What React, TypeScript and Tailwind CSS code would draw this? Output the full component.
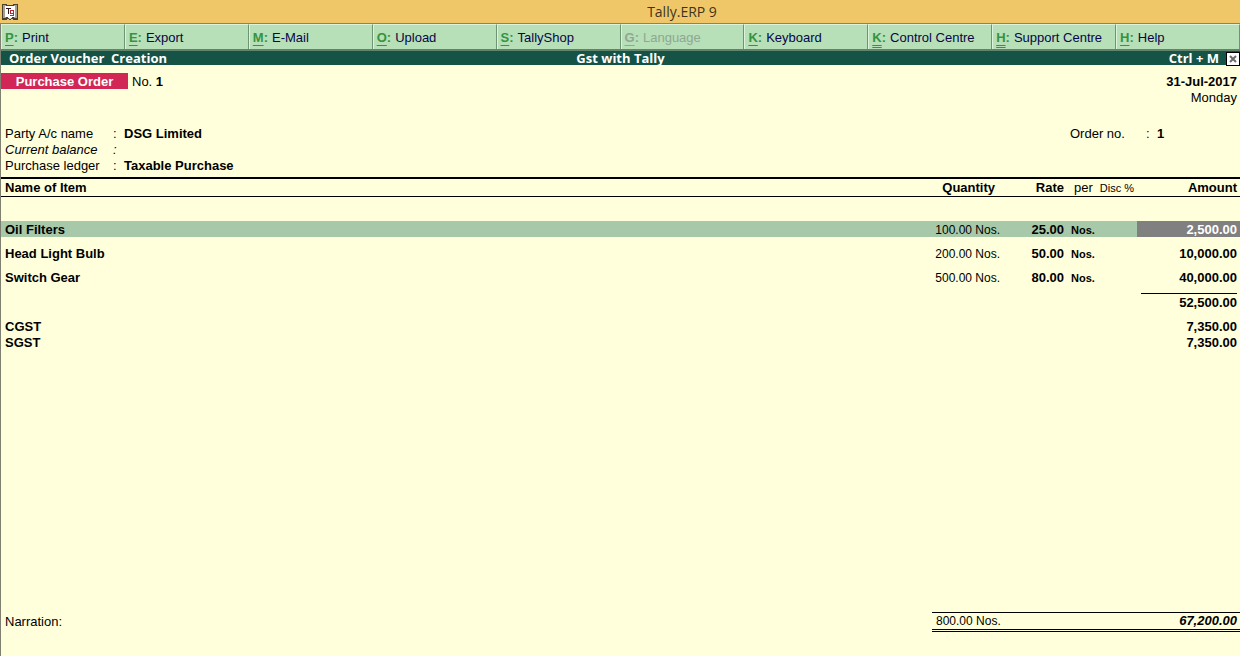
import React from 'react';

interface MenuItem {
  hotkey: string;
  label: string;
  disabled?: boolean;
  double?: boolean;
}

interface OrderItem {
  name: string;
  quantity: string;
  rate: string;
  per: string;
  amount: string;
}

const MENU: MenuItem[] = [
  { hotkey: 'P', label: 'Print' },
  { hotkey: 'E', label: 'Export' },
  { hotkey: 'M', label: 'E-Mail' },
  { hotkey: 'O', label: 'Upload' },
  { hotkey: 'S', label: 'TallyShop' },
  { hotkey: 'G', label: 'Language', disabled: true },
  { hotkey: 'K', label: 'Keyboard' },
  { hotkey: 'K', label: 'Control Centre', double: true },
  { hotkey: 'H', label: 'Support Centre', double: true },
  { hotkey: 'H', label: 'Help' },
];

const ITEMS: OrderItem[] = [
  { name: 'Oil Filters', quantity: '100.00 Nos.', rate: '25.00', per: 'Nos.', amount: '2,500.00' },
  { name: 'Head Light Bulb', quantity: '200.00 Nos.', rate: '50.00', per: 'Nos.', amount: '10,000.00' },
  { name: 'Switch Gear', quantity: '500.00 Nos.', rate: '80.00', per: 'Nos.', amount: '40,000.00' },
];

const TAXES = [
  { name: 'CGST', amount: '7,350.00' },
  { name: 'SGST', amount: '7,350.00' },
];

const SELECTED_ROW = 0;

const AppIcon = () => (
  <svg width="16" height="16" viewBox="0 0 16 16" shapeRendering="crispEdges" aria-hidden="true">
    <path d="M0 0h5v1h6V0h5v16h-5v-1H9v1H7v-1H5v1H0z" fill="#4a4030" />
    <path d="M1 1h3v13H1zM12 1h3v13h-3z" fill="#a5a092" />
    <path d="M3 2h10v11h-3v1H6v-1H3z" fill="#fff" />
    <path d="M4 4h5v1H4zM6 4h1v6H6z" fill="#30181c" />
    <path d="M8 6h4v6H8v-1h3v-1H8zM9 7v2h2V7z" fill="#b52a32" fillRule="evenodd" />
    <path d="M7 14h2v1H7z" fill="#d9d4c4" />
  </svg>
);

const MenuButton: React.FC<{ item: MenuItem }> = ({ item }) => (
  <button
    type="button"
    disabled={item.disabled}
    className={`flex h-full items-center gap-1 border-t border-r border-l border-t-[#dcf3dc] border-r-[#6f9474] border-l-[#dcf3dc] pt-0.5 pl-[3px] text-left whitespace-nowrap ${
      item.disabled ? 'text-[#8fa893]' : 'text-[#06064a]'
    }`}
  >
    <span className={`font-bold ${item.disabled ? 'text-[#8fa893]' : 'text-[#349440]'}`}>
      <span className={`underline underline-offset-3 ${item.double ? 'decoration-double' : ''}`}>{item.hotkey}</span>:
    </span>
    <span>{item.label}</span>
  </button>
);

// Label, colon and value of one voucher field
const Field: React.FC<{ label: string; value?: string; italic?: boolean }> = ({ label, value, italic }) => (
  <div className={`flex ${italic ? 'italic' : ''}`}>
    <dt className="w-27">{label}</dt>
    <dd className="flex">
      <span className="w-[11px]">:</span>
      <span className="font-bold">{value}</span>
    </dd>
  </div>
);

const ItemTable = () => (
  <table className="w-full table-fixed border-collapse leading-[14px]">
    <colgroup>
      <col />
      <col className="w-[100px]" />
      <col className="w-16" />
      <col className="w-[33px]" />
      <col className="w-10" />
      <col className="w-[103px]" />
    </colgroup>
    <thead>
      <tr className="h-[18px] border-t-2 border-b border-black">
        <th className="pt-0.5 pl-1 text-left font-bold">Name of Item</th>
        <th className="pt-0.5 pr-[5px] text-right font-bold">Quantity</th>
        <th className="pt-0.5 text-right font-bold">Rate</th>
        <th className="pt-0.5 pl-[10px] text-left font-normal">per</th>
        <th className="pt-0.5 pr-[3px] text-right text-[11px] font-normal whitespace-nowrap">Disc %</th>
        <th className="pt-0.5 pr-[3px] text-right font-bold">Amount</th>
      </tr>
    </thead>
    <tbody>
      <tr className="h-[25px]">
        <td colSpan={6} />
      </tr>
      {ITEMS.map((item, idx) => {
        const selected = idx === SELECTED_ROW;
        return (
          <React.Fragment key={item.name}>
            <tr className={`h-4 ${selected ? 'bg-[#a8c9a9]' : ''}`}>
              <td className="pt-0.5 pl-1 font-bold">{item.name}</td>
              <td className="pt-0.5 text-right text-xs leading-[14px]">{item.quantity}</td>
              <td className="pt-0.5 text-right font-bold">{item.rate}</td>
              <td className="pt-0.5 pl-[7px] text-[11px] font-bold">{item.per}</td>
              <td />
              <td className={`pt-0.5 pr-[3px] text-right font-bold ${selected ? 'bg-[#808080] text-white' : ''}`}>
                {item.amount}
              </td>
            </tr>
            <tr className="h-2">
              <td colSpan={6} />
            </tr>
          </React.Fragment>
        );
      })}
      <tr>
        <td colSpan={5} />
        <td className="pr-[3px] pl-1 text-right font-bold">
          <div className="border-t border-black pt-0.5">52,500.00</div>
        </td>
      </tr>
      <tr className="h-2">
        <td colSpan={6} />
      </tr>
      {TAXES.map((tax) => (
        <tr key={tax.name} className="h-4">
          <td className="pt-0.5 pl-1 font-bold">{tax.name}</td>
          <td colSpan={4} />
          <td className="pt-0.5 pr-[3px] text-right font-bold">{tax.amount}</td>
        </tr>
      ))}
    </tbody>
  </table>
);

export default function App() {
  return (
    <div className="flex min-h-screen flex-col bg-[#ffffdc] font-['Liberation_Sans',sans-serif] text-[13px] leading-4 text-black">
      <header className="grid h-6 grid-cols-[1fr_auto_1fr] items-center border-b border-[#8b8368] bg-[#f0c768] pl-[2px]">
        <AppIcon />
        <h1 className="pl-[122px] font-['Open_Sans',sans-serif] text-sm text-[#3d3420]">Tally.ERP 9</h1>
      </header>

      <div className="flex flex-1 flex-col border-l border-[#808070]">
        <nav className="grid h-[27px] grid-cols-10 border-b-2 border-[#62846a] bg-[#b7dfb8]">
          {MENU.map((item) => (
            <MenuButton key={item.label} item={item} />
          ))}
        </nav>

        <div className="grid h-[14px] grid-cols-3 items-center bg-[#155346] font-['Open_Sans',sans-serif] leading-[14px] font-bold text-white">
          <div className="pb-0.5 pl-2 whitespace-pre">Order Voucher  Creation</div>
          <div className="pb-0.5 text-center">Gst with Tally</div>
          <div className="flex items-center justify-end gap-[7px]">
            <span className="pb-0.5">Ctrl + M</span>
            <button
              type="button"
              aria-label="Close"
              className="flex h-[14px] w-[14px] items-center justify-center border border-black bg-white"
            >
              <svg width="8" height="8" viewBox="0 0 8 8" aria-hidden="true">
                <path d="M1 1l6 6M7 1l-6 6" stroke="#6b6b6b" strokeWidth="2" />
              </svg>
            </button>
          </div>
        </div>

        <main className="flex flex-1 flex-col pt-2 pb-6">
          <div className="flex items-start justify-between pr-[3px]">
            <div className="flex items-start">
              <h2 className="w-[127px] bg-[#d22756] pt-0.5 text-center leading-[14px] font-bold text-white">
                Purchase Order
              </h2>
              <div className="pt-px pl-1">
                No. <b>1</b>
              </div>
            </div>
            <div className="pt-px text-right">
              <div className="font-bold">31-Jul-2017</div>
              <div>Monday</div>
            </div>
          </div>

          <div className="flex justify-between pt-5 pb-[3px] pl-1">
            <dl>
              <Field label="Party A/c name" value="DSG Limited" />
              <Field label="Current balance" italic />
              <Field label="Purchase ledger" value="Taxable Purchase" />
            </dl>
            <dl className="flex w-[170px]">
              <dt className="w-[76px]">Order no.</dt>
              <dd className="flex">
                <span className="w-[11px]">:</span>
                <b>1</b>
              </dd>
            </dl>
          </div>

          <ItemTable />

          <div className="mt-auto flex items-center justify-between pt-8 pl-1">
            <div>Narration:</div>
            <div className="w-[308px] border-b border-black pb-px">
              <div className="flex h-[18px] items-center justify-between border-y border-black pr-[3px] pl-1">
                <span className="text-xs leading-4">800.00 Nos.</span>
                <span className="font-bold italic">67,200.00</span>
              </div>
            </div>
          </div>
        </main>
      </div>
    </div>
  );
}
